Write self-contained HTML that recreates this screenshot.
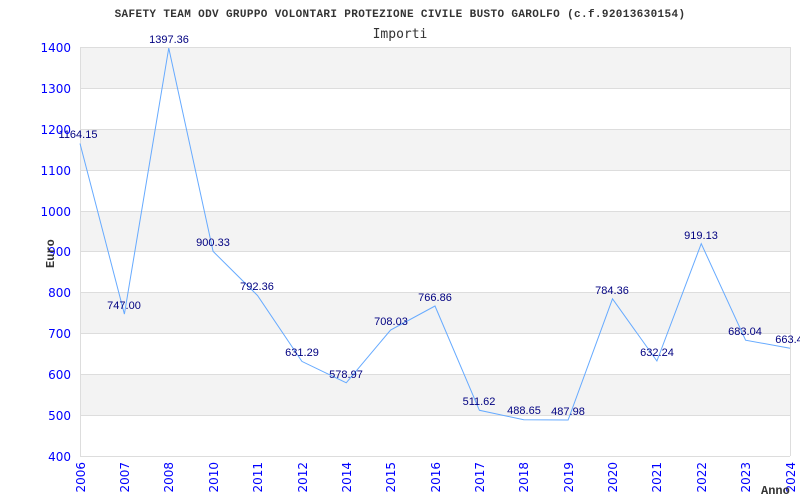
<!DOCTYPE html>
<html><head><meta charset="utf-8"><style>body{margin:0;background:#fff}svg{display:block}</style></head><body>
<svg width="800" height="500" xmlns="http://www.w3.org/2000/svg">
<g fill="#f3f3f3">
<rect x="80" y="47" width="710" height="41"/>
<rect x="80" y="129" width="710" height="41"/>
<rect x="80" y="211" width="710" height="41"/>
<rect x="80" y="292" width="710" height="41"/>
<rect x="80" y="374" width="710" height="41"/>
</g>
<g stroke="#dddddd" stroke-width="1">
<line x1="80" y1="47.5" x2="790" y2="47.5"/><line x1="80" y1="88.5" x2="790" y2="88.5"/>
<line x1="80" y1="129.5" x2="790" y2="129.5"/><line x1="80" y1="170.5" x2="790" y2="170.5"/>
<line x1="80" y1="211.5" x2="790" y2="211.5"/><line x1="80" y1="251.5" x2="790" y2="251.5"/>
<line x1="80" y1="292.5" x2="790" y2="292.5"/><line x1="80" y1="333.5" x2="790" y2="333.5"/>
<line x1="80" y1="374.5" x2="790" y2="374.5"/><line x1="80" y1="415.5" x2="790" y2="415.5"/>
<line x1="80" y1="456.5" x2="790" y2="456.5"/>
<line x1="80.5" y1="47" x2="80.5" y2="456"/><line x1="790.5" y1="47" x2="790.5" y2="456"/>
</g>
<polyline fill="none" stroke="#66aaff" stroke-width="1" points="80,143.5 124.4,314.1 168.75,48.1 213.1,251.4 257.5,295.5 301.9,361.4 346.25,382.8 390.6,330 435,306 479.4,410.3 523.75,419.7 568.1,420 612.5,298.8 656.9,361 701.25,243.7 745.6,340.2 790,348.2"/>
<g font-family="Liberation Sans, sans-serif" font-size="11" fill="#000080" text-anchor="middle">
<text x="78" y="138">1164.15</text><text x="124" y="309">747.00</text><text x="169" y="43">1397.36</text>
<text x="213" y="246">900.33</text><text x="257" y="290">792.36</text><text x="302" y="356">631.29</text>
<text x="346" y="378">578.97</text><text x="391" y="325">708.03</text><text x="435" y="301">766.86</text>
<text x="479" y="405">511.62</text><text x="524" y="414">488.65</text><text x="568" y="415">487.98</text>
<text x="612" y="294">784.36</text><text x="657" y="356">632.24</text><text x="701" y="239">919.13</text>
<text x="745" y="335">683.04</text><text x="789" y="316" dy="27">663.4</text>
</g>
<g font-family="DejaVu Sans, sans-serif" font-size="12" fill="#0000ff" text-anchor="end">
<text x="71" y="52">1400</text><text x="71" y="93">1300</text><text x="71" y="134">1200</text>
<text x="71" y="175">1100</text><text x="71" y="216">1000</text><text x="71" y="256">900</text>
<text x="71" y="297">800</text><text x="71" y="338">700</text><text x="71" y="379">600</text>
<text x="71" y="420">500</text><text x="71" y="461">400</text>
</g>
<g font-family="DejaVu Sans, sans-serif" font-size="12" fill="#0000ff" text-anchor="end">
<text transform="translate(85,462) rotate(-90)">2006</text>
<text transform="translate(129,462) rotate(-90)">2007</text>
<text transform="translate(173,462) rotate(-90)">2008</text>
<text transform="translate(218,462) rotate(-90)">2010</text>
<text transform="translate(262,462) rotate(-90)">2011</text>
<text transform="translate(307,462) rotate(-90)">2012</text>
<text transform="translate(351,462) rotate(-90)">2014</text>
<text transform="translate(395,462) rotate(-90)">2015</text>
<text transform="translate(440,462) rotate(-90)">2016</text>
<text transform="translate(484,462) rotate(-90)">2017</text>
<text transform="translate(528,462) rotate(-90)">2018</text>
<text transform="translate(573,462) rotate(-90)">2019</text>
<text transform="translate(617,462) rotate(-90)">2020</text>
<text transform="translate(661,462) rotate(-90)">2021</text>
<text transform="translate(706,462) rotate(-90)">2022</text>
<text transform="translate(750,462) rotate(-90)">2023</text>
<text transform="translate(795,462) rotate(-90)">2024</text>
</g>
<text x="400" y="17" text-anchor="middle" font-family="Liberation Mono, monospace" font-size="11" font-weight="bold" letter-spacing="0.36" fill="#333">SAFETY TEAM ODV GRUPPO VOLONTARI PROTEZIONE CIVILE BUSTO GAROLFO (c.f.92013630154)</text>
<text x="400" y="38" text-anchor="middle" font-family="DejaVu Sans Mono, monospace" font-size="13" fill="#333">Importi</text>
<text transform="translate(54,268) rotate(-90)" font-family="Liberation Mono, monospace" font-size="12" font-weight="bold" fill="#333">Euro</text>
<text x="761" y="494" font-family="Liberation Mono, monospace" font-size="12" font-weight="bold" fill="#333">Anno</text>
</svg>
</body></html>
